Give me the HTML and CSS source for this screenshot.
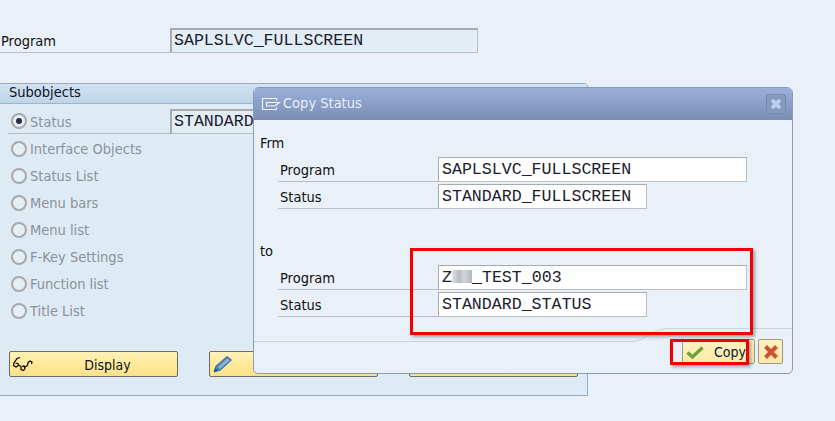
FILE: index.html
```html
<!DOCTYPE html>
<html lang="en">
<head>
<meta charset="utf-8">
<title>Copy Status</title>
<link rel="stylesheet" href="styles.css">
</head>
<body>
<main class="screen">
  <div class="row top-row">
    <span class="label">Program</span>
    <span class="field ro wide">SAPLSLVC_FULLSCREEN</span>
  </div>
  <section class="panel">
    <h2 class="panel-head">Subobjects</h2>
    <div class="options">
      <div class="option first"><span class="radio on"></span><span class="opt-text">Status</span><span class="field ro status-field">STANDARD_FULLSCREEN</span></div>
      <div class="option"><span class="radio"></span><span class="opt-text">Interface Objects</span></div>
      <div class="option"><span class="radio"></span><span class="opt-text">Status List</span></div>
      <div class="option"><span class="radio"></span><span class="opt-text">Menu bars</span></div>
      <div class="option"><span class="radio"></span><span class="opt-text">Menu list</span></div>
      <div class="option"><span class="radio"></span><span class="opt-text">F-Key Settings</span></div>
      <div class="option"><span class="radio"></span><span class="opt-text">Function list</span></div>
      <div class="option"><span class="radio"></span><span class="opt-text">Title List</span></div>
    </div>
    <div class="actions">
      <button class="btn big">
        <svg class="btn-icon" viewBox="0 0 22 16" width="22" height="16"><path d="M8 1.500 5 2.500 2 7 1.500 9.500 4 11 6.500 9.500 6 7.500 3.500 7M6.500 9 9 10.500M9 11 9 13.500 11.500 14.500 13 12.500 12 10 9.500 10.500M13 11 15.500 9.500 16 6.500 18 5 20 6 19.500 8" fill="none" stroke="#000" stroke-width="1.200"/></svg>
        <span class="big-text">Display</span>
      </button>
      <button class="btn big">
        <svg class="btn-icon pen" viewBox="0 0 20 18" width="20" height="18"><path d="M1 17 3 11 14 1.500 18.500 5 7.500 15Z" fill="#4f86b8" stroke="#2f6ea5"/><path d="M5 12 14.500 3.500 16.500 5.500 7 14Z" fill="#93afd6"/><path d="M1 17 2.200 13 5 15.500Z" fill="#1d5c92"/></svg>
        <span class="big-text">Change</span>
      </button>
      <button class="btn big"><span class="big-text">Copy</span></button>
    </div>
  </section>

  <div class="dialog">
    <header class="dlg-title">
      <svg class="dlg-icon" viewBox="0 0 20 16" width="20" height="16"><path d="M15.500 4.500V2.500H1.500V13.500H15.500V11.500" fill="none" stroke="#f2f5fb" stroke-width="1.200"/><path d="M5.500 6.500H18.500L14 10H5.500Z" fill="none" stroke="#f2f5fb" stroke-width="1.200"/></svg>
      <span class="dlg-name">Copy Status</span>
      <span class="dlg-close"><svg viewBox="0 0 14 14" width="14" height="14"><path d="M3 3 11 11M11 3 3 11" stroke="#b9d3f5" stroke-width="3.600"/></svg></span>
    </header>
    <div class="dlg-body">
      <div class="group-label">Frm</div>
      <div class="dlg-row"><span class="dlg-label">Program</span><span class="field in long">SAPLSLVC_FULLSCREEN</span></div>
      <div class="dlg-row"><span class="dlg-label">Status</span><span class="field in short">STANDARD_FULLSCREEN</span></div>
      <div class="group-label second">to</div>
      <div class="dlg-row"><span class="dlg-label">Program</span><span class="field in long">Z<span class="blur"></span>_TEST_003</span></div>
      <div class="dlg-row"><span class="dlg-label">Status</span><span class="field in short">STANDARD_STATUS</span></div>
    </div>
    <svg class="dlg-curve" viewBox="0 0 538 16" width="538" height="16"><path d="M0 14.500H378C392 14.500 396 1.500 416 1.500H538" fill="none" stroke="#c9d2de"/></svg>
    <footer class="dlg-foot">
      <button class="btn small copy">
        <svg viewBox="0 0 18 14" width="18" height="14"><path d="M1.500 7.500 6.500 12 16.500 2.500" fill="none" stroke="#6da33a" stroke-width="3.400"/></svg>
        <span>Copy</span>
      </button>
      <button class="btn small cancel">
        <svg viewBox="0 0 16 16" width="16" height="16"><path d="M2.500 2.500 13.500 13.500M13.500 2.500 2.500 13.500" stroke="#d1512d" stroke-width="4"/></svg>
      </button>
    </footer>
  </div>

  <div class="mark mark-fields"></div>
  <div class="mark mark-copy"></div>
</main>
</body>
</html>
```

FILE: styles.css
```css
* { box-sizing: border-box; }
html, body { margin: 0; padding: 0; }
body {
  width: 835px;
  height: 421px;
  overflow: hidden;
  background: #e9f0f7;
  font-family: "DejaVu Sans", "Noto Sans", sans-serif;
  font-stretch: condensed;
  font-size: 14.5px;
  color: #111;
}
.screen { position: relative; width: 835px; height: 421px; padding-top: 28px; overflow: hidden; }

.row { display: flex; align-items: stretch; }
.top-row { height: 25px; border-bottom: 1px solid #b9bec4; width: 170px; }
.label { padding: 3px 0 0 1px; line-height: 20px; width: 170px; flex: none; }

.field {
  display: block;
  flex: none;
  font-family: "Liberation Mono", monospace;
  font-stretch: normal;
  font-size: 16.6px;
  line-height: 21px;
  padding-left: 2px;
  white-space: nowrap;
  overflow: hidden;
  border: 1px solid #a6abb0;
  border-bottom-color: #bcc0c4;
  border-right-color: #bcc0c4;
  color: #1a2030;
}
.ro { background: #e3edf5; border-top-width: 2px; border-left-width: 2px; }
.wide { width: 308px; height: 25px; flex: none; }
.in { background: #fff; height: 25px; padding-top: 1px; padding-left: 3px; }
.long { width: 309px; }
.short { width: 209px; }

.panel {
  margin-top: 30px;
  width: 588px;
  height: 313px;
  background: #deeaf4;
  border: 1px solid #95aec8;
  border-left: 0;
  border-radius: 0 4px 0 0;
  display: flex;
  flex-direction: column;
}
.panel-head {
  margin: 0;
  height: 20px;
  padding-left: 9px;
  font-size: 14.5px;
  font-weight: 400;
  line-height: 17px;
  color: #0b1424;
  background: linear-gradient(#d2e2f1, #bed4e9);
  border-bottom: 1px solid #9db6d0;
}
.options { padding: 5px 0 0 8px; height: 247px; flex: none; }
.option { display: flex; align-items: center; height: 27px; color: #8c929b; }
.option.first { height: 25px; margin-bottom: 1px; border-bottom: 1px solid #b9bec4; width: 162px; overflow: visible; }
.radio {
  flex: none;
  width: 16px;
  height: 16px;
  margin: 0 3px 0 3px;
  border-radius: 50%;
  border: 2px solid #a6a9ad;
  background: #e6eef6;
  position: relative;
}
.radio.on::after {
  content: "";
  position: absolute;
  left: 3px;
  top: 3px;
  width: 6px;
  height: 6px;
  border-radius: 50%;
  background: #2b2f45;
}
.opt-text { flex: none; line-height: 20px; white-space: nowrap; width: 139px; }
.first .opt-text { padding-top: 1px; }
.status-field { width: 300px; height: 25px; margin-left: 1px; }

.actions { display: flex; gap: 31px; padding-left: 9px; margin-top: 0; }
.btn {
  font-family: "DejaVu Sans", "Noto Sans", sans-serif;
  font-stretch: condensed;
  font-size: 14px;
  color: #0b1424;
  border: 1px solid #6b6b63;
  border-radius: 2px;
  background: linear-gradient(#fff3b8, #ffe896 55%, #fbe18c);
  padding: 0;
}
.big {
  position: relative;
  width: 169px;
  height: 26px;
  display: flex;
  align-items: center;
  justify-content: center;
}
.big-text { padding: 1px 0 0 28px; }
.btn-icon { position: absolute; left: 2px; top: 4px; }
.btn-icon.pen { left: 3px; top: 3px; }

.dialog {
  position: absolute;
  left: 253px;
  top: 87px;
  width: 540px;
  height: 287px;
  background: #e9f0f7;
  border: 1px solid #8b9ab8;
  border-radius: 6px 6px 5px 5px;
  overflow: hidden;
}
.dlg-title {
  height: 32px;
  display: flex;
  align-items: center;
  padding: 0 6px 0 7px;
  background: linear-gradient(#9ab0db, #7a8db3);
  color: #e9eef8;
}
.dlg-icon { flex: none; }
.dlg-name { margin-left: 2px; line-height: 20px; position: relative; top: -1px; }
.dlg-close {
  margin-left: auto;
  width: 20px;
  height: 20px;
  display: flex;
  align-items: center;
  justify-content: center;
  background: #8699bd;
  border: 1px solid #7b8cb0;
  border-radius: 2px;
}
.dlg-body { padding: 13px 0 0 6px; }
.group-label { line-height: 20px; height: 24px; }
.group-label.second { margin-top: 30px; }
.dlg-row {
  display: flex;
  height: 27px;
  margin-left: 18px;
}
.dlg-label {
  width: 160px;
  flex: none;
  height: 25px;
  border-bottom: 1px solid #b9bec4;
  padding: 1px 0 0 2px;
  line-height: 25px;
}
.blur {
  display: inline-block;
  width: 20px;
  height: 13px;
  vertical-align: -1px;
  background: linear-gradient(90deg, #dfe3e8, #b8bcc2 35%, #d2d5da 60%, #b4b8be);
}
.dlg-curve { position: absolute; left: 0; top: 239px; }
.dlg-foot {
  position: absolute;
  right: 9px;
  bottom: 9px;
  display: flex;
  gap: 3px;
}
.small {
  height: 25px;
  display: flex;
  align-items: center;
  background: linear-gradient(#fdf2c4, #fbe9a8);
  border-color: #a09a84;
}
.copy { width: 73px; padding-left: 3px; }
.copy span { margin-left: 10px; }
.cancel { width: 25px; justify-content: center; }

.mark {
  position: absolute;
  border: 3px solid #f40000;
  box-shadow: 2px 2px 3px rgba(60, 70, 80, .45);
}
.mark-fields { left: 410px; top: 248px; width: 343px; height: 87px; }
.mark-copy { left: 670px; top: 339px; width: 79px; height: 26px; }
```
